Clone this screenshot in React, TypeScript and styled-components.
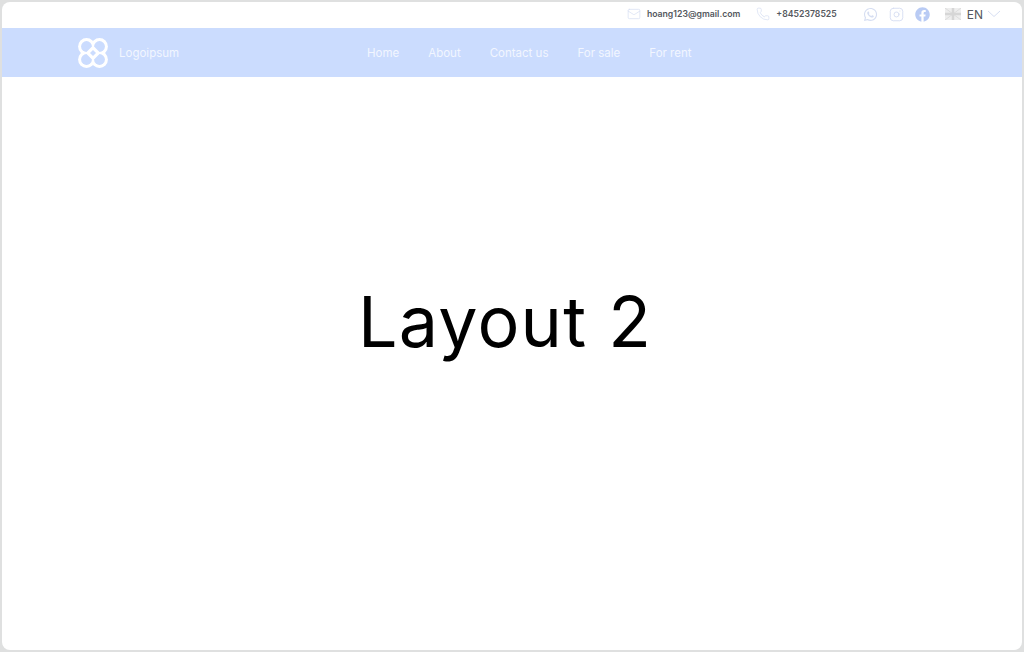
import React from "react";
import styled, { createGlobalStyle } from "styled-components";
import { FaFacebook, FaWhatsapp } from "react-icons/fa";
import { Mail, Phone, Instagram } from "lucide-react";

const GlobalStyle = createGlobalStyle`
  html, body {
    margin: 0;
    padding: 0;
    background: #dfe0e0;
  }
`;

const Frame = styled.div`
  box-sizing: border-box;
  width: 1024px;
  height: 652px;
  padding: 2px;
  background: #dfe0e0;
  font-family: "Inter", sans-serif;
`;

const Screen = styled.div`
  height: 100%;
  display: flex;
  flex-direction: column;
  background: #fff;
  border-radius: 8px;
  overflow: hidden;
`;

const TopBar = styled.div`
  box-sizing: border-box;
  height: 26px;
  flex: none;
  display: flex;
  align-items: center;
  justify-content: flex-end;
  padding: 0 21px 2px 0;
`;

const Contact = styled.div<{ $space: number }>`
  display: flex;
  align-items: center;
  gap: 6px;
  margin-right: ${(p) => p.$space}px;
  color: #55585e;
  font-size: 8.7px;
  font-weight: 600;
`;

const Socials = styled.div`
  display: flex;
  align-items: center;
  gap: 11px;
  margin-right: 15px;
  color: #d6def2;
`;

const Language = styled.div`
  display: flex;
  align-items: center;
  gap: 6px;
  color: #55585e;
  font-size: 12px;
`;

const ChevronIcon = styled.svg`
  margin-left: -2px;
`;

const NavBar = styled.nav`
  height: 49px;
  flex: none;
  display: flex;
  align-items: center;
  padding-left: 76px;
  background: #cbdcfe;
  color: #f2f6ff;
`;

const Brand = styled.div`
  display: flex;
  align-items: center;
  gap: 11px;
  width: 289px;
  font-size: 11.5px;
`;

const Links = styled.div`
  display: flex;
  gap: 29px;
`;

const NavLink = styled.a`
  font-size: 11.5px;
  color: #f2f6ff;
  text-decoration: none;
`;

const Main = styled.main`
  flex: 1;
  display: flex;
  align-items: center;
  justify-content: center;
  padding: 0 14px 84px 0;
`;

const Title = styled.h1`
  margin: 0;
  font-family: "Inter", sans-serif;
  font-size: 70px;
  font-weight: 400;
  line-height: 1;
  letter-spacing: 1.2px;
  color: #000;
`;

const lobes = [
  [8.5, 8.5],
  [21.5, 8.5],
  [8.5, 21.5],
  [21.5, 21.5],
];

const Logo = () => (
  <svg width="30" height="30" viewBox="0 0 30 30">
    {lobes.map(([cx, cy]) => (
      <circle key={`o${cx}${cy}`} cx={cx} cy={cy} r="8.4" fill="#fff" />
    ))}
    {lobes.map(([cx, cy]) => (
      <circle key={`i${cx}${cy}`} cx={cx} cy={cy} r="5.4" fill="#cbdcfe" />
    ))}
    <path d="M15 7.5L22.5 15L15 22.5L7.5 15Z" fill="#fff" />
    <path d="M15 12L18 15L15 18L12 15Z" fill="#cbdcfe" />
  </svg>
);

const Flag = () => (
  <svg width="16" height="12" viewBox="0 0 16 12">
    <rect width="16" height="12" fill="#eeeeee" />
    <path d="M0 0L16 12M16 0L0 12" stroke="#dcdcdc" strokeWidth="1" />
    <path d="M8 0V12M0 6H16" stroke="#d6d6d6" strokeWidth="2.5" />
  </svg>
);

const Chevron = () => (
  <ChevronIcon width="14" height="8" viewBox="0 0 14 8" fill="none" stroke="#d6def2" strokeWidth="1">
    <path d="M1 1l6 5.5L13 1" />
  </ChevronIcon>
);

const navItems = ["Home", "About", "Contact us", "For sale", "For rent"];

const App = () => {
  return (
    <Frame>
      <GlobalStyle />
      <Screen>
        <TopBar>
          <Contact $space={16}>
            <Mail size={14} color="#d6def2" strokeWidth={1.2} />
            hoang123@gmail.com
          </Contact>
          <Contact $space={26}>
            <Phone size={14} color="#d6def2" strokeWidth={1.2} />
            +8452378525
          </Contact>
          <Socials>
            <FaWhatsapp size={15} />
            <Instagram size={15} strokeWidth={1.5} />
            <FaFacebook size={15} color="#b9cbf4" />
          </Socials>
          <Language>
            <Flag />
            EN
            <Chevron />
          </Language>
        </TopBar>
        <NavBar>
          <Brand>
            <Logo />
            Logoipsum
          </Brand>
          <Links>
            {navItems.map((item) => (
              <NavLink key={item}>{item}</NavLink>
            ))}
          </Links>
        </NavBar>
        <Main>
          <Title>Layout 2</Title>
        </Main>
      </Screen>
    </Frame>
  );
};

export default App;
